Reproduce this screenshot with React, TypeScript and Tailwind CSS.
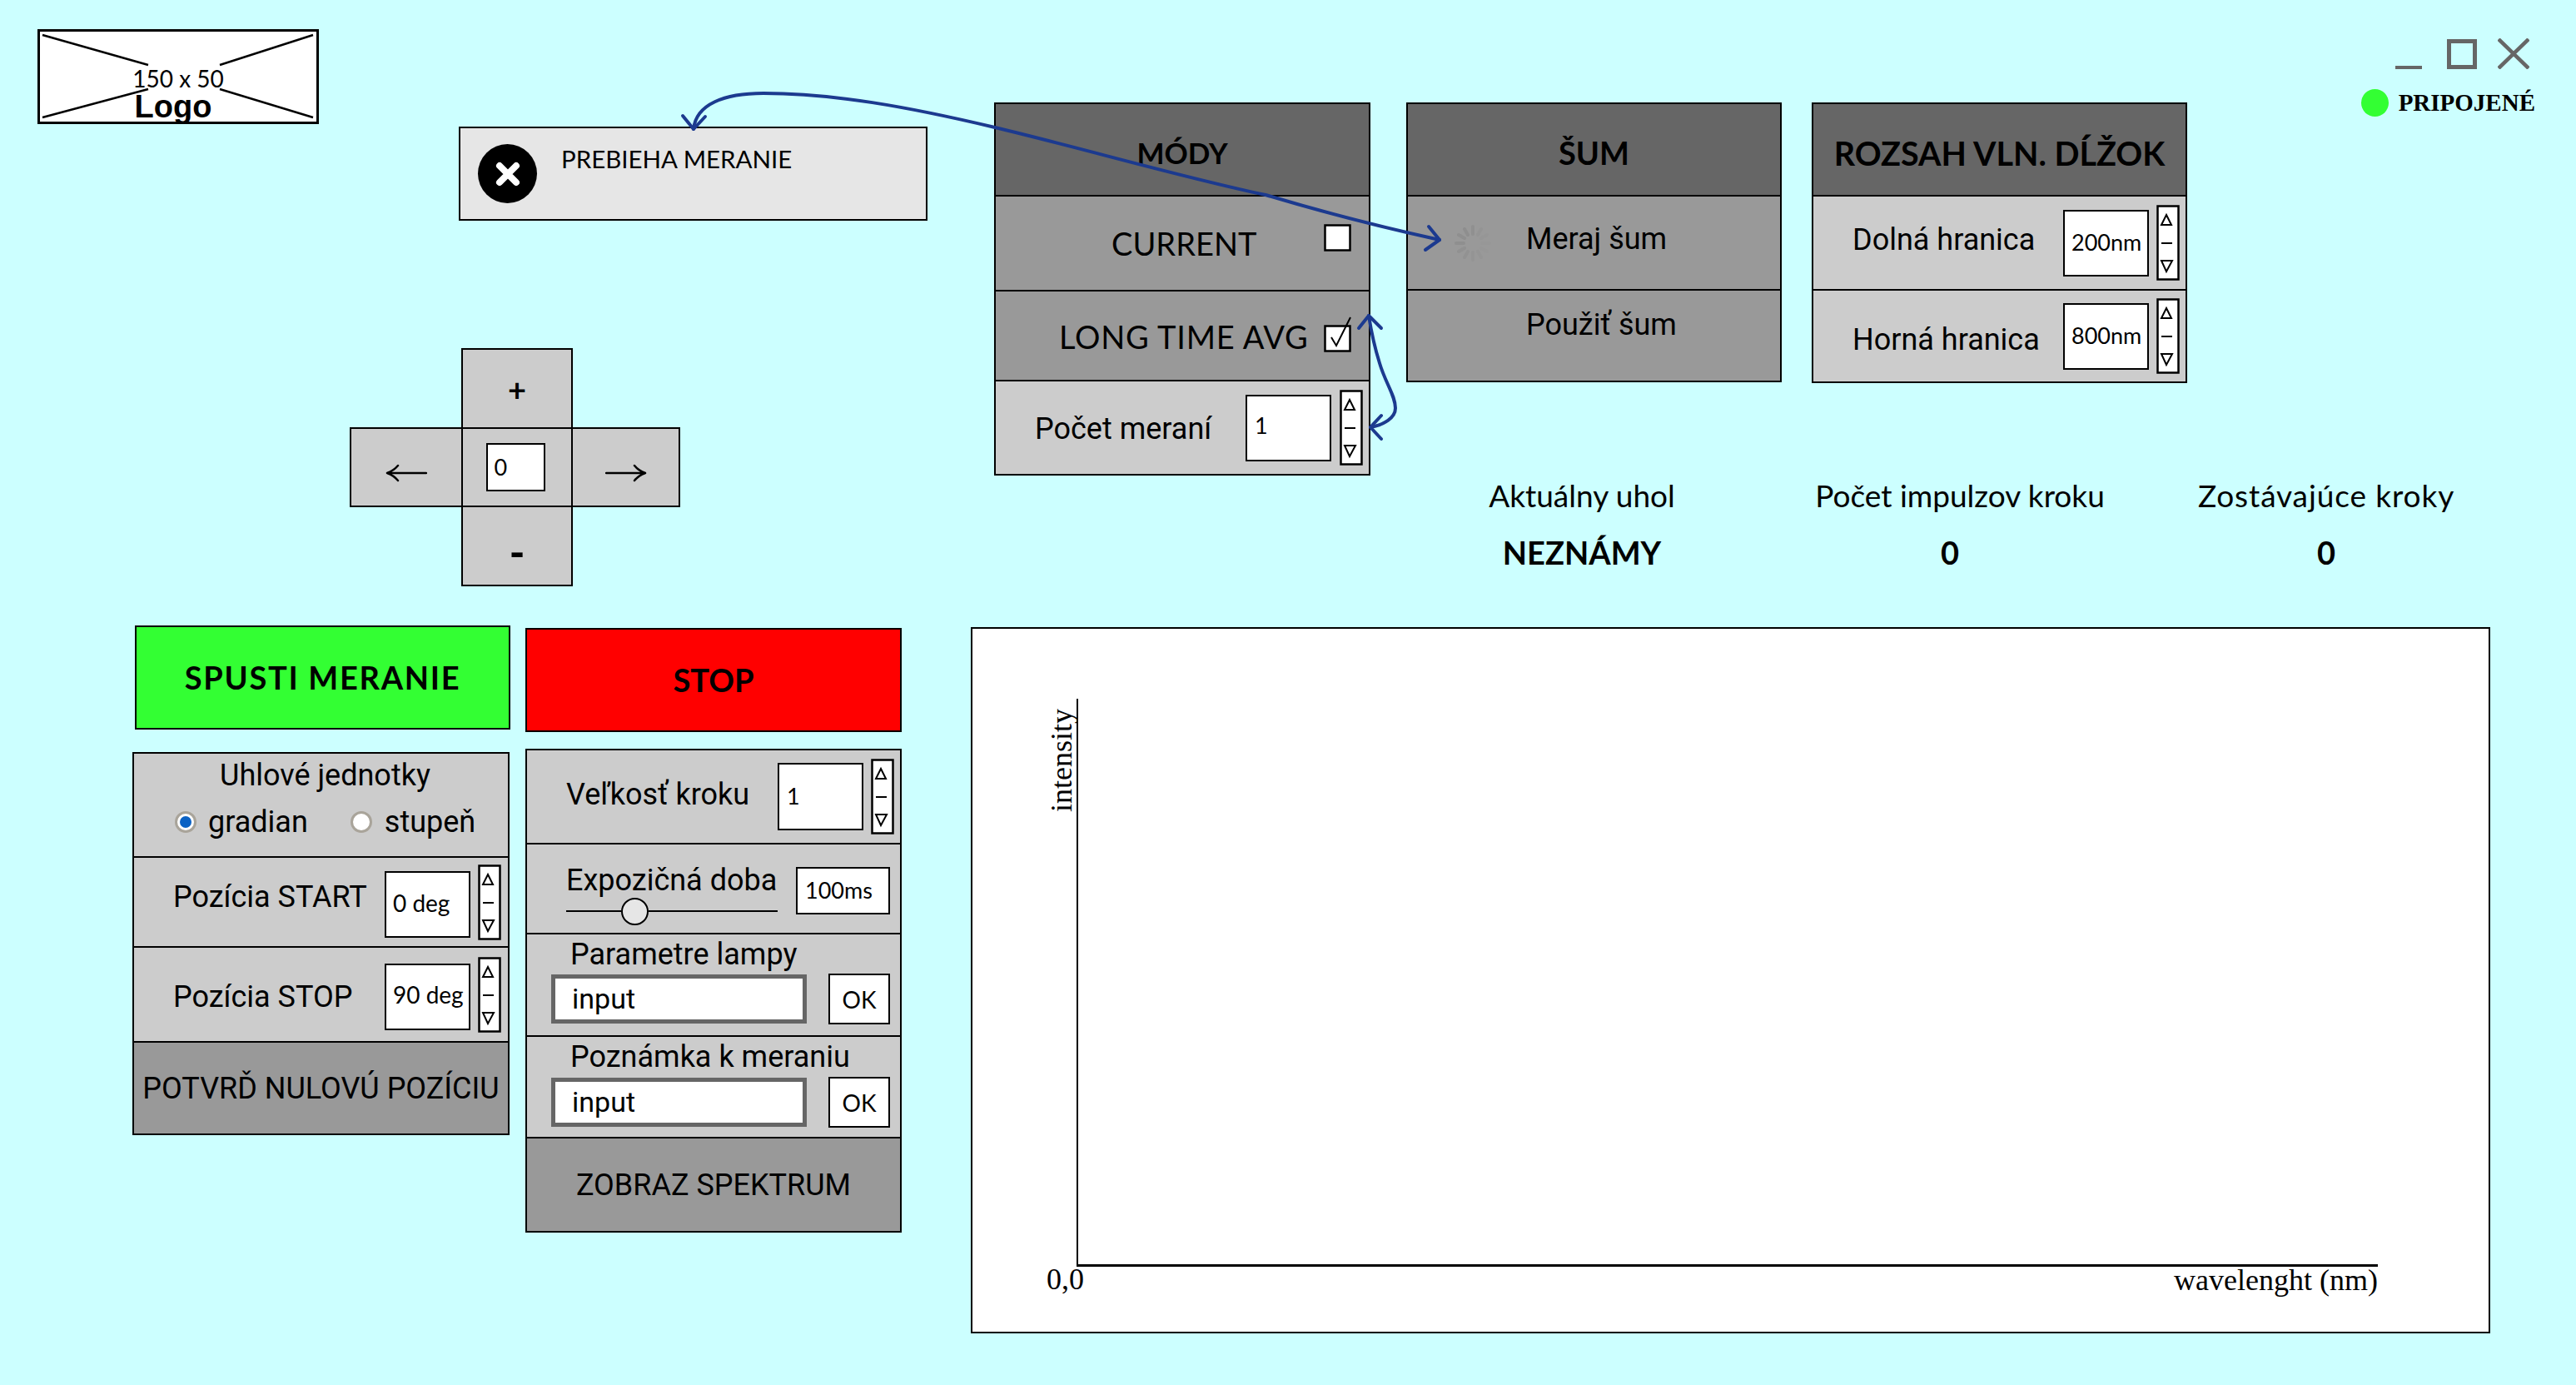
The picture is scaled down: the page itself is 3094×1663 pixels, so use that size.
import React from "react";

const sketch = "font-['Lato',sans-serif]";
const roboto = "font-['Roboto',sans-serif]";

const Stepper = ({ className = "" }: { className?: string }) => (
  <svg className={`shrink-0 ${className}`} width="28" height="91" viewBox="0 0 28 91" fill="none" stroke="#000">
    <rect x="1.5" y="1.5" width="25" height="88" fill="#fff" strokeWidth="2.5" />
    <path d="M12 12 L18 24 L6 24 Z" strokeWidth="2" />
    <path d="M6 46 H19" strokeWidth="2" />
    <path d="M6 67 H19 L12 80 Z" strokeWidth="2" />
  </svg>
);

const NumberBox = ({ value, className = "", pad = "pl-[10px]", text = "text-[27px]" }: { value: string; className?: string; pad?: string; text?: string }) => (
  <div className={`shrink-0 flex items-center bg-white border-2 border-black text-black ${text} ${sketch} ${pad} ${className}`}>
    {value}
  </div>
);

const CheckBox = ({ checked = false }: { checked?: boolean }) => (
  <svg className="shrink-0" width="34" height="46" viewBox="0 0 34 46" fill="none" stroke="#000">
    <rect x="1.5" y="13.5" width="30" height="30" fill="#fff" strokeWidth="2.5" />
    {checked && <path d="M9 27 L15 37 L32 3" strokeWidth="2" />}
  </svg>
);

const Spinner = () => (
  <svg width="46" height="46" viewBox="0 0 46 46" stroke="#8a8a8a" strokeWidth="4" strokeLinecap="round">
    <path d="M23 3 V12" opacity="0.55" />
    <path d="M33 6 L29 13" opacity="0.3" />
    <path d="M40 13 L33 17" opacity="0.15" />
    <path d="M43 23 H34" opacity="0.1" />
    <path d="M40 33 L33 29" opacity="0.12" />
    <path d="M33 40 L29 33" opacity="0.2" />
    <path d="M23 43 V34" opacity="0.3" />
    <path d="M13 40 L17 33" opacity="0.4" />
    <path d="M6 33 L13 29" opacity="0.5" />
    <path d="M3 23 H12" opacity="0.6" />
    <path d="M6 13 L13 17" opacity="0.65" />
    <path d="M13 6 L17 13" opacity="0.7" />
  </svg>
);

const Radio = ({ selected = false }: { selected?: boolean }) => (
  <span className="shrink-0 flex items-center justify-center w-[26px] h-[26px] rounded-full bg-white border-[3px] border-[#a9a49a]">
    {selected && <span className="w-[14px] h-[14px] rounded-full bg-[#0b62c4]" />}
  </span>
);

const TextField = () => (
  <div className={`w-[307px] h-[59px] flex items-center pl-[20px] bg-white border-[5px] border-[#666666] text-[34px] text-black ${roboto}`}>
    input
  </div>
);

const OkBox = () => (
  <div className={`shrink-0 ml-[26px] w-[74px] h-[61px] flex items-center justify-center bg-white border-2 border-black text-[28px] ${sketch}`}>
    OK
  </div>
);

const PanelHeader = ({ children }: { children: React.ReactNode }) => (
  <div className={`h-[109px] pt-[8px] flex items-center justify-center bg-[#666666] font-bold text-black ${sketch}`}>
    {children}
  </div>
);

const Stat = ({ label, value, className = "", valueClass = "", labelClass = "" }: { label: string; value: string; className?: string; valueClass?: string; labelClass?: string }) => (
  <div className={`w-[400px] flex flex-col items-center text-black ${sketch} ${className}`}>
    <div className={`h-[46px] leading-[44px] text-[37px] whitespace-nowrap ${labelClass}`}>{label}</div>
    <div className={`mt-[22px] h-[46px] leading-[44px] text-[38px] font-bold ${valueClass}`}>{value}</div>
  </div>
);

const DpadCell = ({ children, className = "" }: { children?: React.ReactNode; className?: string }) => (
  <div className={`flex items-center justify-center bg-[#cccccc] border-2 border-black text-black ${sketch} ${className}`}>
    {children}
  </div>
);

const LongArrow = ({ flip = false }: { flip?: boolean }) => (
  <svg className={flip ? "rotate-180" : ""} width="50" height="22" viewBox="0 0 50 22" fill="none" stroke="#000" strokeWidth="2.5" strokeLinecap="round" strokeLinejoin="round">
    <path d="M49 11 H2 M15 2 Q10 8 2 11 Q10 14 15 20" />
  </svg>
);

const Arrows = () => (
  <svg className="absolute inset-0 pointer-events-none" width="3094" height="1663" viewBox="0 0 3094 1663" fill="none" stroke="#1c3a8f" strokeWidth="4" strokeLinecap="round" strokeLinejoin="round">
    <path d="M833 155 C836 125 870 112 917 112 C1000 112 1090 128 1195 153 C1300 178 1420 213 1520 234 C1600 258 1670 275 1729 288" />
    <path d="M820 139 L833 155 L847 140" />
    <path d="M1716 272 L1729 288 L1712 300" />
    <path d="M1644 379 C1648 405 1652 420 1657 436 C1664 460 1676 475 1676 490 C1676 502 1662 510 1646 513" />
    <path d="M1632 394 L1644 379 L1659 394" />
    <path d="M1659 499 L1646 513 L1659 527" />
  </svg>
);

export default function App() {
  return (
    <div className="relative w-[3094px] h-[1663px] overflow-hidden flex flex-col bg-[#ccffff]">
      {/* top area */}
      <div className="flex h-[751px] shrink-0">
        <div className="w-[1194px] shrink-0 flex flex-col items-start">
          <div className="ml-[45px] mt-[35px] w-[338px] h-[114px] relative bg-white border-[3px] border-black flex flex-col items-center">
            <svg className="absolute inset-0" width="332" height="108" viewBox="0 0 332 108" stroke="#000" strokeWidth="2.5">
              <path d="M3 4 L130 40 M328 4 L216 40 M3 103 L130 69 M328 103 L216 69" />
            </svg>
            <div className={`relative mt-[40px] h-[32px] leading-[32px] text-[28px] ${sketch}`}>150 x 50</div>
            <div className="relative mr-[12px] h-[36px] leading-[36px] text-[38px] font-bold font-['Liberation_Sans',sans-serif]">Logo</div>
          </div>
          <div className="ml-[551px] mt-[3px] w-[563px] h-[113px] flex items-start bg-[#e6e6e6] border-2 border-black">
            <div className="mt-[19px] ml-[21px] w-[71px] h-[71px] shrink-0 flex items-center justify-center rounded-full bg-black">
              <svg width="32" height="32" viewBox="0 0 32 32" stroke="#fff" strokeWidth="8" strokeLinecap="round">
                <path d="M6 6 L26 26 M26 6 L6 26" />
              </svg>
            </div>
            <div className={`ml-[29px] mt-[20px] text-[29.5px] leading-[34px] text-black ${sketch}`}>PREBIEHA MERANIE</div>
          </div>
          {/* d-pad */}
          <div className="ml-[420px] mt-[153px] w-[397px] flex flex-col">
            <DpadCell className="ml-[134px] w-[134px] h-[97px] font-bold pt-[2px] text-[38px]">+</DpadCell>
            <div className="flex h-[96px] -mt-[2px]">
              <DpadCell className="w-[136px] pt-[14px]"><LongArrow /></DpadCell>
              <DpadCell className="-ml-[2px] w-[134px]">
                <div className={`mr-[4px] w-[71px] h-[58px] flex items-center pl-[8px] bg-white border-2 border-black text-[27px] ${sketch}`}>0</div>
              </DpadCell>
              <DpadCell className="-ml-[2px] w-[131px] pt-[14px]"><LongArrow flip /></DpadCell>
            </div>
            <DpadCell className="ml-[134px] -mt-[2px] w-[134px] h-[97px] font-black pt-[14px] text-[50px]">-</DpadCell>
          </div>
        </div>

        {/* modes */}
        <div className="w-[452px] h-[448px] mt-[123px] shrink-0 flex flex-col border-2 border-black">
          <PanelHeader><span className="text-[35px]">MÓDY</span></PanelHeader>
          <div className={`h-[114px] flex items-center pl-[139px] pr-[20px] border-t-2 border-black bg-[#999999] text-[38px] text-black ${sketch}`}>
            <span>CURRENT</span>
            <span className="ml-auto pb-[24px]"><CheckBox /></span>
          </div>
          <div className={`h-[108px] flex items-center pl-[76px] pr-[20px] border-t-2 border-black bg-[#999999] text-[38px] text-black ${sketch}`}>
            <span className="pt-[2px] tracking-[0.8px]">LONG TIME AVG</span>
            <span className="ml-auto pb-[4px]"><CheckBox checked /></span>
          </div>
          <div className={`flex-1 flex items-center pl-[47px] pr-[7px] border-t-2 border-black bg-[#cccccc] text-[36px] text-black ${roboto}`}>
            <span className="pt-[2px]">Počet meraní</span>
            <NumberBox value="1" pad="pl-[9px] pb-[4px]" className="ml-auto w-[103px] h-[80px]" />
            <Stepper className="ml-[10px]" />
          </div>
        </div>

        <div className="ml-[43px] flex-1 flex flex-col">
          <div className="flex">
            {/* noise */}
            <div className="w-[451px] h-[336px] mt-[123px] shrink-0 flex flex-col border-2 border-black">
              <PanelHeader><span className="text-[38px]">ŠUM</span></PanelHeader>
              <div className={`h-[113px] flex items-center pl-[55px] border-t-2 border-black bg-[#999999] text-[36px] text-black ${roboto}`}>
                <Spinner />
                <span className="ml-[41px] pb-[10px]">Meraj šum</span>
              </div>
              <div className={`flex-1 flex items-center pl-[142px] pb-[26px] border-t-2 border-black bg-[#999999] text-[36px] text-black ${roboto}`}>
                Použiť šum
              </div>
            </div>
            {/* wavelength range */}
            <div className="ml-[36px] w-[451px] h-[337px] mt-[123px] shrink-0 flex flex-col border-2 border-black">
              <PanelHeader><span className="text-[39.5px]">ROZSAH VLN. DĹŽOK</span></PanelHeader>
              <div className={`h-[113px] flex items-center pl-[47px] pr-[7px] border-t-2 border-black bg-[#cccccc] text-[36px] text-black ${roboto}`}>
                <span className="pb-[8px]">Dolná hranica</span>
                <NumberBox value="200nm" pad="pl-[8px]" className="ml-auto w-[103px] h-[80px]" />
                <Stepper className="ml-[9px]" />
              </div>
              <div className={`flex-1 flex items-center pl-[47px] pr-[7px] border-t-2 border-black bg-[#cccccc] text-[36px] text-black ${roboto}`}>
                <span className="pt-[8px]">Horná hranica</span>
                <NumberBox value="800nm" pad="pl-[8px]" className="ml-auto w-[103px] h-[80px]" />
                <Stepper className="ml-[9px]" />
              </div>
            </div>
            {/* window controls + status */}
            <div className="flex-1 flex flex-col items-end pr-[49px]">
              <div className="mt-[46px] flex items-end mr-[7px]">
                <div className="w-[32px] h-[4px] bg-[#666666]" />
                <div className="ml-[30px] w-[36px] h-[36px] border-[5px] border-[#666666]" />
                <svg className="ml-[25px]" width="38" height="37" viewBox="0 0 38 37" stroke="#666666" strokeWidth="4.5">
                  <path d="M1 1 L37 36 M37 1 L1 36" />
                </svg>
              </div>
              <div className="mt-[19px] flex items-center">
                <span className="w-[33px] h-[33px] rounded-full bg-[#33ff33]" />
                <span className="ml-[12px] text-[29px] font-bold text-black font-['Liberation_Serif',serif]">PRIPOJENÉ</span>
              </div>
            </div>
          </div>
          <div className="flex mt-[113px]">
            <Stat label="Aktuálny uhol" value="NEZNÁMY" className="ml-[11px]" />
            <Stat label="Počet impulzov kroku" value="0" className="ml-[54px]" valueClass="mr-[24px]" />
            <Stat label="Zostávajúce kroky" value="0" className="ml-[40px]" labelClass="tracking-[0.9px]" />
          </div>
        </div>
      </div>

      {/* bottom area */}
      <div className="flex flex-1 min-h-0 items-start">
        <div className="ml-[159px] w-[453px] shrink-0 flex flex-col">
          <div className={`ml-[3px] w-[451px] h-[125px] flex items-center justify-center bg-[#33ff33] border-2 border-black text-[38px] font-bold tracking-[1.7px] text-black ${sketch}`}>
            SPUSTI MERANIE
          </div>
          <div className={`mt-[27px] w-[453px] flex flex-col border-2 border-black bg-[#cccccc] text-[36px] text-black ${roboto}`}>
            <div className="h-[123px] flex flex-col items-center">
              <div className="mt-[8px] ml-[10px] h-[36px] leading-[36px]">Uhlové jednotky</div>
              <div className="mt-[18px] self-start flex items-center h-[40px] pl-[49px]">
                <Radio selected />
                <span className="ml-[14px]">gradian</span>
                <span className="ml-[51px]"><Radio /></span>
                <span className="ml-[15px]">stupeň</span>
              </div>
            </div>
            <div className="h-[108px] flex items-center pl-[47px] pr-[8px] border-t-2 border-black">
              <span className="pb-[12px]">Pozícia START</span>
              <NumberBox value="0 deg" text="text-[28px]" pad="pl-[8px] pb-[4px]" className="ml-auto w-[103px] h-[80px] mt-[6px]" />
              <Stepper className="ml-[9px]" />
            </div>
            <div className="h-[114px] flex items-center pl-[47px] pr-[8px] border-t-2 border-black">
              <span className="pt-[6px]">Pozícia STOP</span>
              <NumberBox value="90 deg" text="text-[28px]" pad="pl-[8px] pb-[6px]" className="ml-auto w-[103px] h-[80px] mt-[6px]" />
              <Stepper className="ml-[9px]" />
            </div>
            <div className="h-[111px] flex items-center justify-center border-t-2 border-black bg-[#999999]">
              POTVRĎ NULOVÚ POZÍCIU
            </div>
          </div>
        </div>

        <div className="ml-[19px] w-[452px] shrink-0 flex flex-col">
          <div className={`mt-[3px] h-[125px] flex items-center justify-center bg-[#ff0000] border-2 border-black text-[38px] font-bold text-black ${sketch}`}>
            STOP
          </div>
          <div className={`mt-[20px] flex flex-col border-2 border-black bg-[#cccccc] text-[36px] text-black ${roboto}`}>
            <div className="h-[111px] flex items-center pl-[47px] pr-[7px]">
              <span className="pb-[6px]">Veľkosť kroku</span>
              <NumberBox value="1" pad="pl-[9px]" className="ml-auto w-[103px] h-[81px]" />
              <Stepper className="ml-[9px]" />
            </div>
            <div className="h-[108px] flex items-center pl-[47px] pr-[12px] border-t-2 border-black">
              <div className="w-[254px] pt-[12px] flex flex-col">
                <span className="mt-[2px] h-[40px] leading-[40px]">Expozičná doba</span>
                <div className="h-[34px] flex items-center">
                  <div className="w-[66px] h-[2px] bg-black" />
                  <div className="w-[33px] h-[33px] shrink-0 rounded-full bg-[#e6e6e6] border-2 border-black" />
                  <div className="flex-1 h-[2px] bg-black" />
                </div>
              </div>
              <NumberBox value="100ms" pad="pl-[9px]" className="ml-auto mt-[4px] w-[113px] h-[57px]" />
            </div>
            <div className="h-[123px] flex flex-col pl-[29px] pr-[12px] border-t-2 border-black">
              <span className="mt-[4px] ml-[23px] h-[40px] leading-[40px]">Parametre lampy</span>
              <div className="mt-[3px] flex items-center">
                <TextField />
                <OkBox />
              </div>
            </div>
            <div className="h-[122px] flex flex-col pl-[29px] pr-[12px] border-t-2 border-black">
              <span className="mt-[4px] ml-[23px] h-[40px] leading-[40px]">Poznámka k meraniu</span>
              <div className="mt-[4px] flex items-center">
                <TextField />
                <OkBox />
              </div>
            </div>
            <div className="h-[113px] flex items-center justify-center border-t-2 border-black bg-[#999999]">
              ZOBRAZ SPEKTRUM
            </div>
          </div>
        </div>

        {/* chart */}
        <div className="ml-[83px] mt-[2px] w-[1825px] h-[848px] shrink-0 bg-white border-2 border-black">
          <div className="relative ml-[125px] mt-[84px] w-[1563px] h-[682px] border-l-2 border-b-[3px] border-black font-['Liberation_Serif',serif] text-black text-[36px]">
            <span className="absolute -left-[38px] top-[12px] [writing-mode:vertical-rl] rotate-180 leading-none">intensity</span>
            <span className="absolute -left-[38px] top-[679px] leading-none">0,0</span>
            <span className="absolute right-0 top-[680px] leading-none whitespace-nowrap">wavelenght (nm)</span>
          </div>
        </div>
      </div>

      <Arrows />
    </div>
  );
}
